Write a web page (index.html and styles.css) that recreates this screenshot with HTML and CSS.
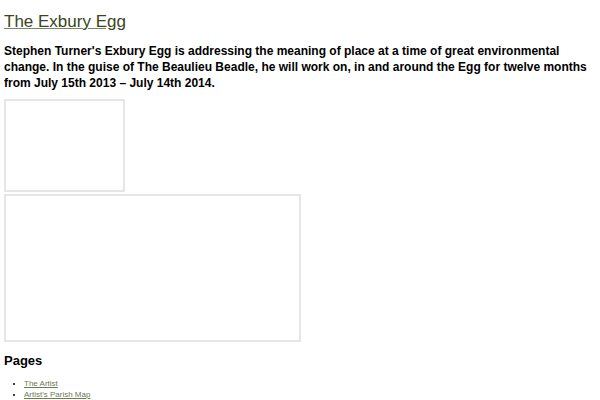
FILE: index.html
```html
<!DOCTYPE html>
<html>
<head>
<meta charset="utf-8">
<link rel="stylesheet" href="styles.css">
</head>
<body>
<h1 class="site-title"><a href="#">The Exbury Egg</a></h1>
<p class="intro">Stephen Turner's Exbury Egg is addressing the meaning of place at a time of great environmental change. In the guise of The Beaulieu Beadle, he will work on, in and around the Egg for twelve months from July 15th 2013 – July 14th 2014.</p>
<div class="frame small"></div>
<div class="frame large"></div>
<h2 class="widget-title">Pages</h2>
<ul class="pages">
<li><a href="#">The Artist</a></li>
<li><a href="#">Artist's Parish Map</a></li>
</ul>
</body>
</html>
```
FILE: styles.css
```css
body {
  margin: 4px;
  font-family: "Liberation Sans", Arial, sans-serif;
  color: #000;
  background: #fff;
}
.site-title {
  font-size: 17px;
  font-weight: normal;
  margin: 8px 0 11px;
  line-height: 20px;
}
.site-title a {
  color: #3a4520;
  text-decoration: underline;
  text-decoration-color: #7d8466;
}
.intro {
  font-size: 12px;
  font-weight: bold;
  line-height: 16px;
  margin: 0 0 8px;
}
.frame {
  border: 2px solid #e6e6e6;
  box-sizing: border-box;
}
.frame.small {
  width: 121px;
  height: 93px;
  margin-bottom: 2px;
}
.frame.large {
  width: 297px;
  height: 148px;
}
.widget-title {
  font-size: 13px;
  font-weight: bold;
  margin: 11px 0 9px;
  line-height: 16px;
}
.pages {
  margin: 0;
  padding-left: 20px;
  font-size: 8px;
  line-height: 11px;
}
.pages a {
  color: #6d7a52;
}
```
